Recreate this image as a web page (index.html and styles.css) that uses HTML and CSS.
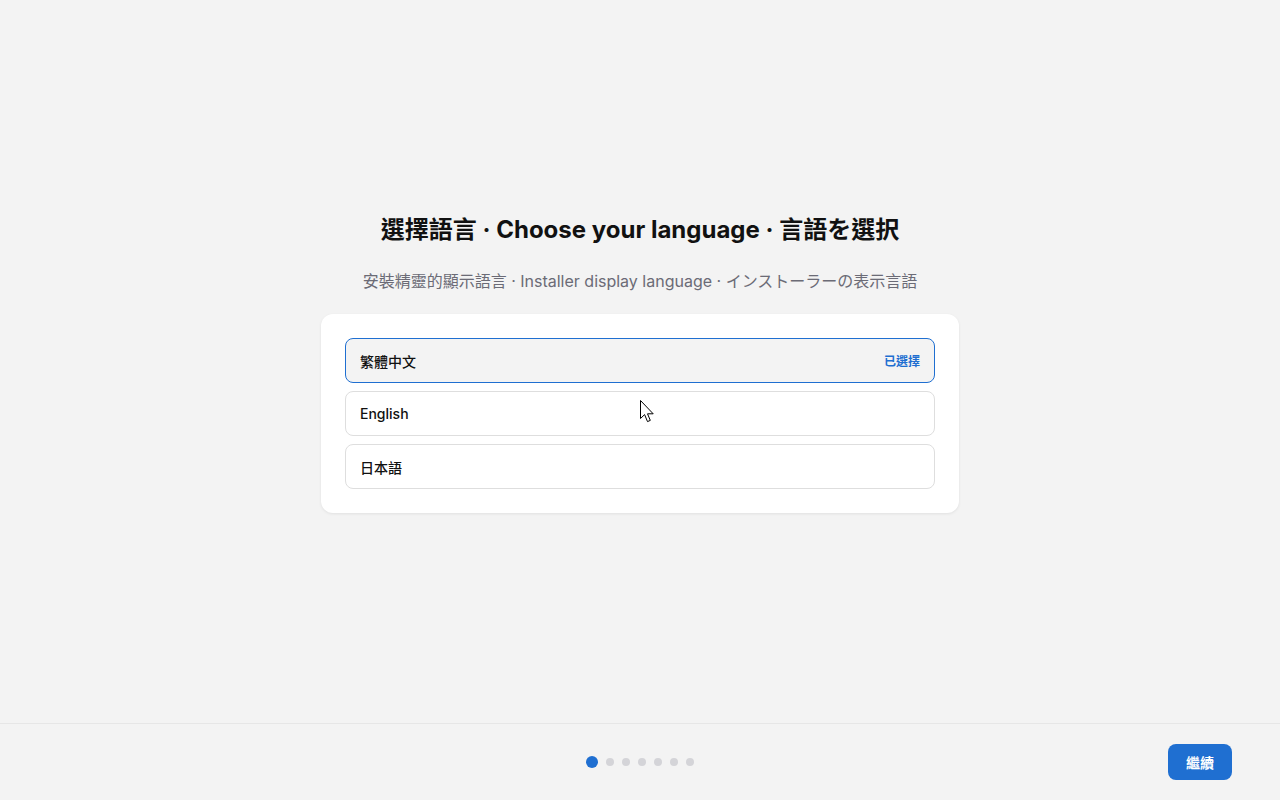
FILE: index.html
```html
<!DOCTYPE html>
<html lang="zh-Hant">
<head>
<meta charset="utf-8">
<title>選擇語言</title>
<link rel="stylesheet" href="styles.css">
</head>
<body>
<div class="app">
  <main class="main">
    <h1 class="title">選擇語言 · Choose your language · 言語を選択</h1>
    <p class="subtitle">安裝精靈的顯示語言 · Installer display language · インストーラーの表示言語</p>
    <div class="card">
      <div class="option selected"><span class="label">繁體中文</span><span class="badge">已選擇</span></div>
      <div class="option"><span class="label">English</span></div>
      <div class="option"><span class="label">日本語</span></div>
    </div>
  </main>
  <footer class="footer">
    <div class="dots">
      <span class="dot active"></span>
      <span class="dot"></span>
      <span class="dot"></span>
      <span class="dot"></span>
      <span class="dot"></span>
      <span class="dot"></span>
      <span class="dot"></span>
    </div>
    <button class="next">繼續</button>
  </footer>
</div>
<svg class="cursor" width="16" height="25" viewBox="0 0 16 25">
  <path d="M0.5 0.5 L0.5 18.5 L4.6 14.6 L7.5 21.6 L10.3 20.4 L7.5 13.8 L13.2 13.8 Z" fill="#fff" stroke="#000" stroke-width="1" stroke-linejoin="miter"/>
</svg>
</body>
</html>
```
FILE: styles.css
```css
* { box-sizing: border-box; }
html, body { margin: 0; padding: 0; }
body {
  width: 1280px;
  height: 800px;
  background: #f3f3f3;
  font-family: Inter, "Noto Sans CJK TC", "Noto Sans CJK JP", sans-serif;
  color: #111;
  overflow: hidden;
  position: relative;
}
.app {
  display: flex;
  flex-direction: column;
  height: 800px;
}
.main {
  flex: 1;
  display: flex;
  flex-direction: column;
  align-items: center;
  justify-content: center;
  padding-top: 4px;
}
.title {
  margin: 0 0 23px;
  font-size: 24px;
  line-height: 32px;
  font-weight: 700;
  color: #111;
}
.subtitle {
  margin: 0 0 21px;
  font-size: 16px;
  line-height: 24px;
  color: #6b6b76;
}
.card {
  width: 638px;
  background: #fff;
  border-radius: 12px;
  padding: 24px;
  display: flex;
  flex-direction: column;
  gap: 8px;
  box-shadow: 0 1px 3px rgba(0,0,0,0.08);
}
.option {
  height: 45px;
  border: 1px solid #dedede;
  border-radius: 8px;
  display: flex;
  align-items: center;
  justify-content: space-between;
  padding: 0 14px;
  font-size: 14px;
  font-weight: 500;
  background: #fff;
}
.option.selected {
  background: #f3f3f3;
  border-color: #1f6fd1;
}
.label { color: #111; }
.badge {
  font-size: 12px;
  font-weight: 700;
  color: #1f6fd1;
}
.footer {
  height: 77px;
  flex: none;
  border-top: 1px solid #e6e6e6;
  display: flex;
  align-items: center;
  justify-content: center;
  position: relative;
}
.dots {
  display: flex;
  align-items: center;
  gap: 8px;
}
.dot {
  width: 8px;
  height: 8px;
  border-radius: 50%;
  background: #d4d4d8;
}
.dot.active {
  width: 12px;
  height: 12px;
  background: #1f6fd1;
}
.next {
  position: absolute;
  right: 48px;
  top: 20px;
  width: 64px;
  height: 36px;
  border: none;
  border-radius: 8px;
  background: #1f6fd1;
  color: #fff;
  font-family: Inter, "Noto Sans CJK TC", sans-serif;
  font-size: 14px;
  font-weight: 700;
}
.cursor {
  position: absolute;
  left: 640px;
  top: 400px;
}
```
